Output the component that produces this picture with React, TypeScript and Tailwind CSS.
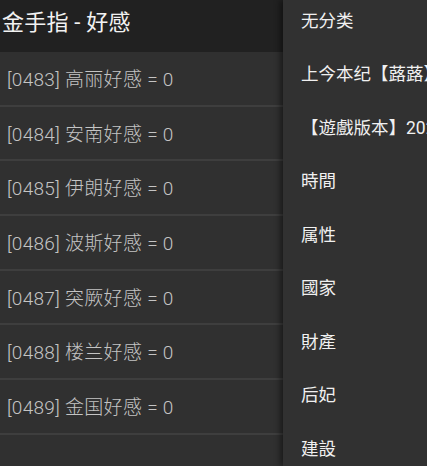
const rows = [
  "[0483] 高丽好感 = 0",
  "[0484] 安南好感 = 0",
  "[0485] 伊朗好感 = 0",
  "[0486] 波斯好感 = 0",
  "[0487] 突厥好感 = 0",
  "[0488] 楼兰好感 = 0",
  "[0489] 金国好感 = 0",
];

const menu = [
  "无分类",
  "上今本纪【蕗蕗】",
  "【遊戲版本】2021",
  "時間",
  "属性",
  "國家",
  "財產",
  "后妃",
  "建設",
];

export default function App() {
  return (
    <div
      className="relative h-[466px] w-[427px] overflow-hidden bg-[#303030]"
      style={{ fontFamily: "Roboto, 'Noto Sans CJK SC', sans-serif" }}
    >
      {/* Header */}
      <div className="flex h-[52px] items-center bg-[#212121] pb-[8px] pl-[2px] text-[22px] tracking-[0.2px] text-[#f2f2f2]">
        金手指 - 好感
      </div>

      {/* Cheat list */}
      <div className="flex w-[283px] flex-col">
        {rows.map((r) => (
          <div
            key={r}
            className="flex h-[54.67px] items-center border-b-2 border-[#3e3e3e] pt-[4px] pl-[7px] text-[19px] font-light tracking-[0.3px] text-[#c4c4c4]"
          >
            {r}
          </div>
        ))}
      </div>

      {/* Popup menu */}
      <div className="absolute top-0 bottom-0 left-[283px] w-[200px] bg-[#313131] shadow-[-3px_0_6px_rgba(0,0,0,0.45)]">
        <div className="-mt-[5.75px] flex flex-col">
          {menu.map((m) => (
            <div
              key={m}
              className="flex h-[53.5px] items-center whitespace-nowrap pl-[18px] text-[17.5px] text-[#f0f0f0]"
            >
              {m}
            </div>
          ))}
        </div>
      </div>
    </div>
  );
}
